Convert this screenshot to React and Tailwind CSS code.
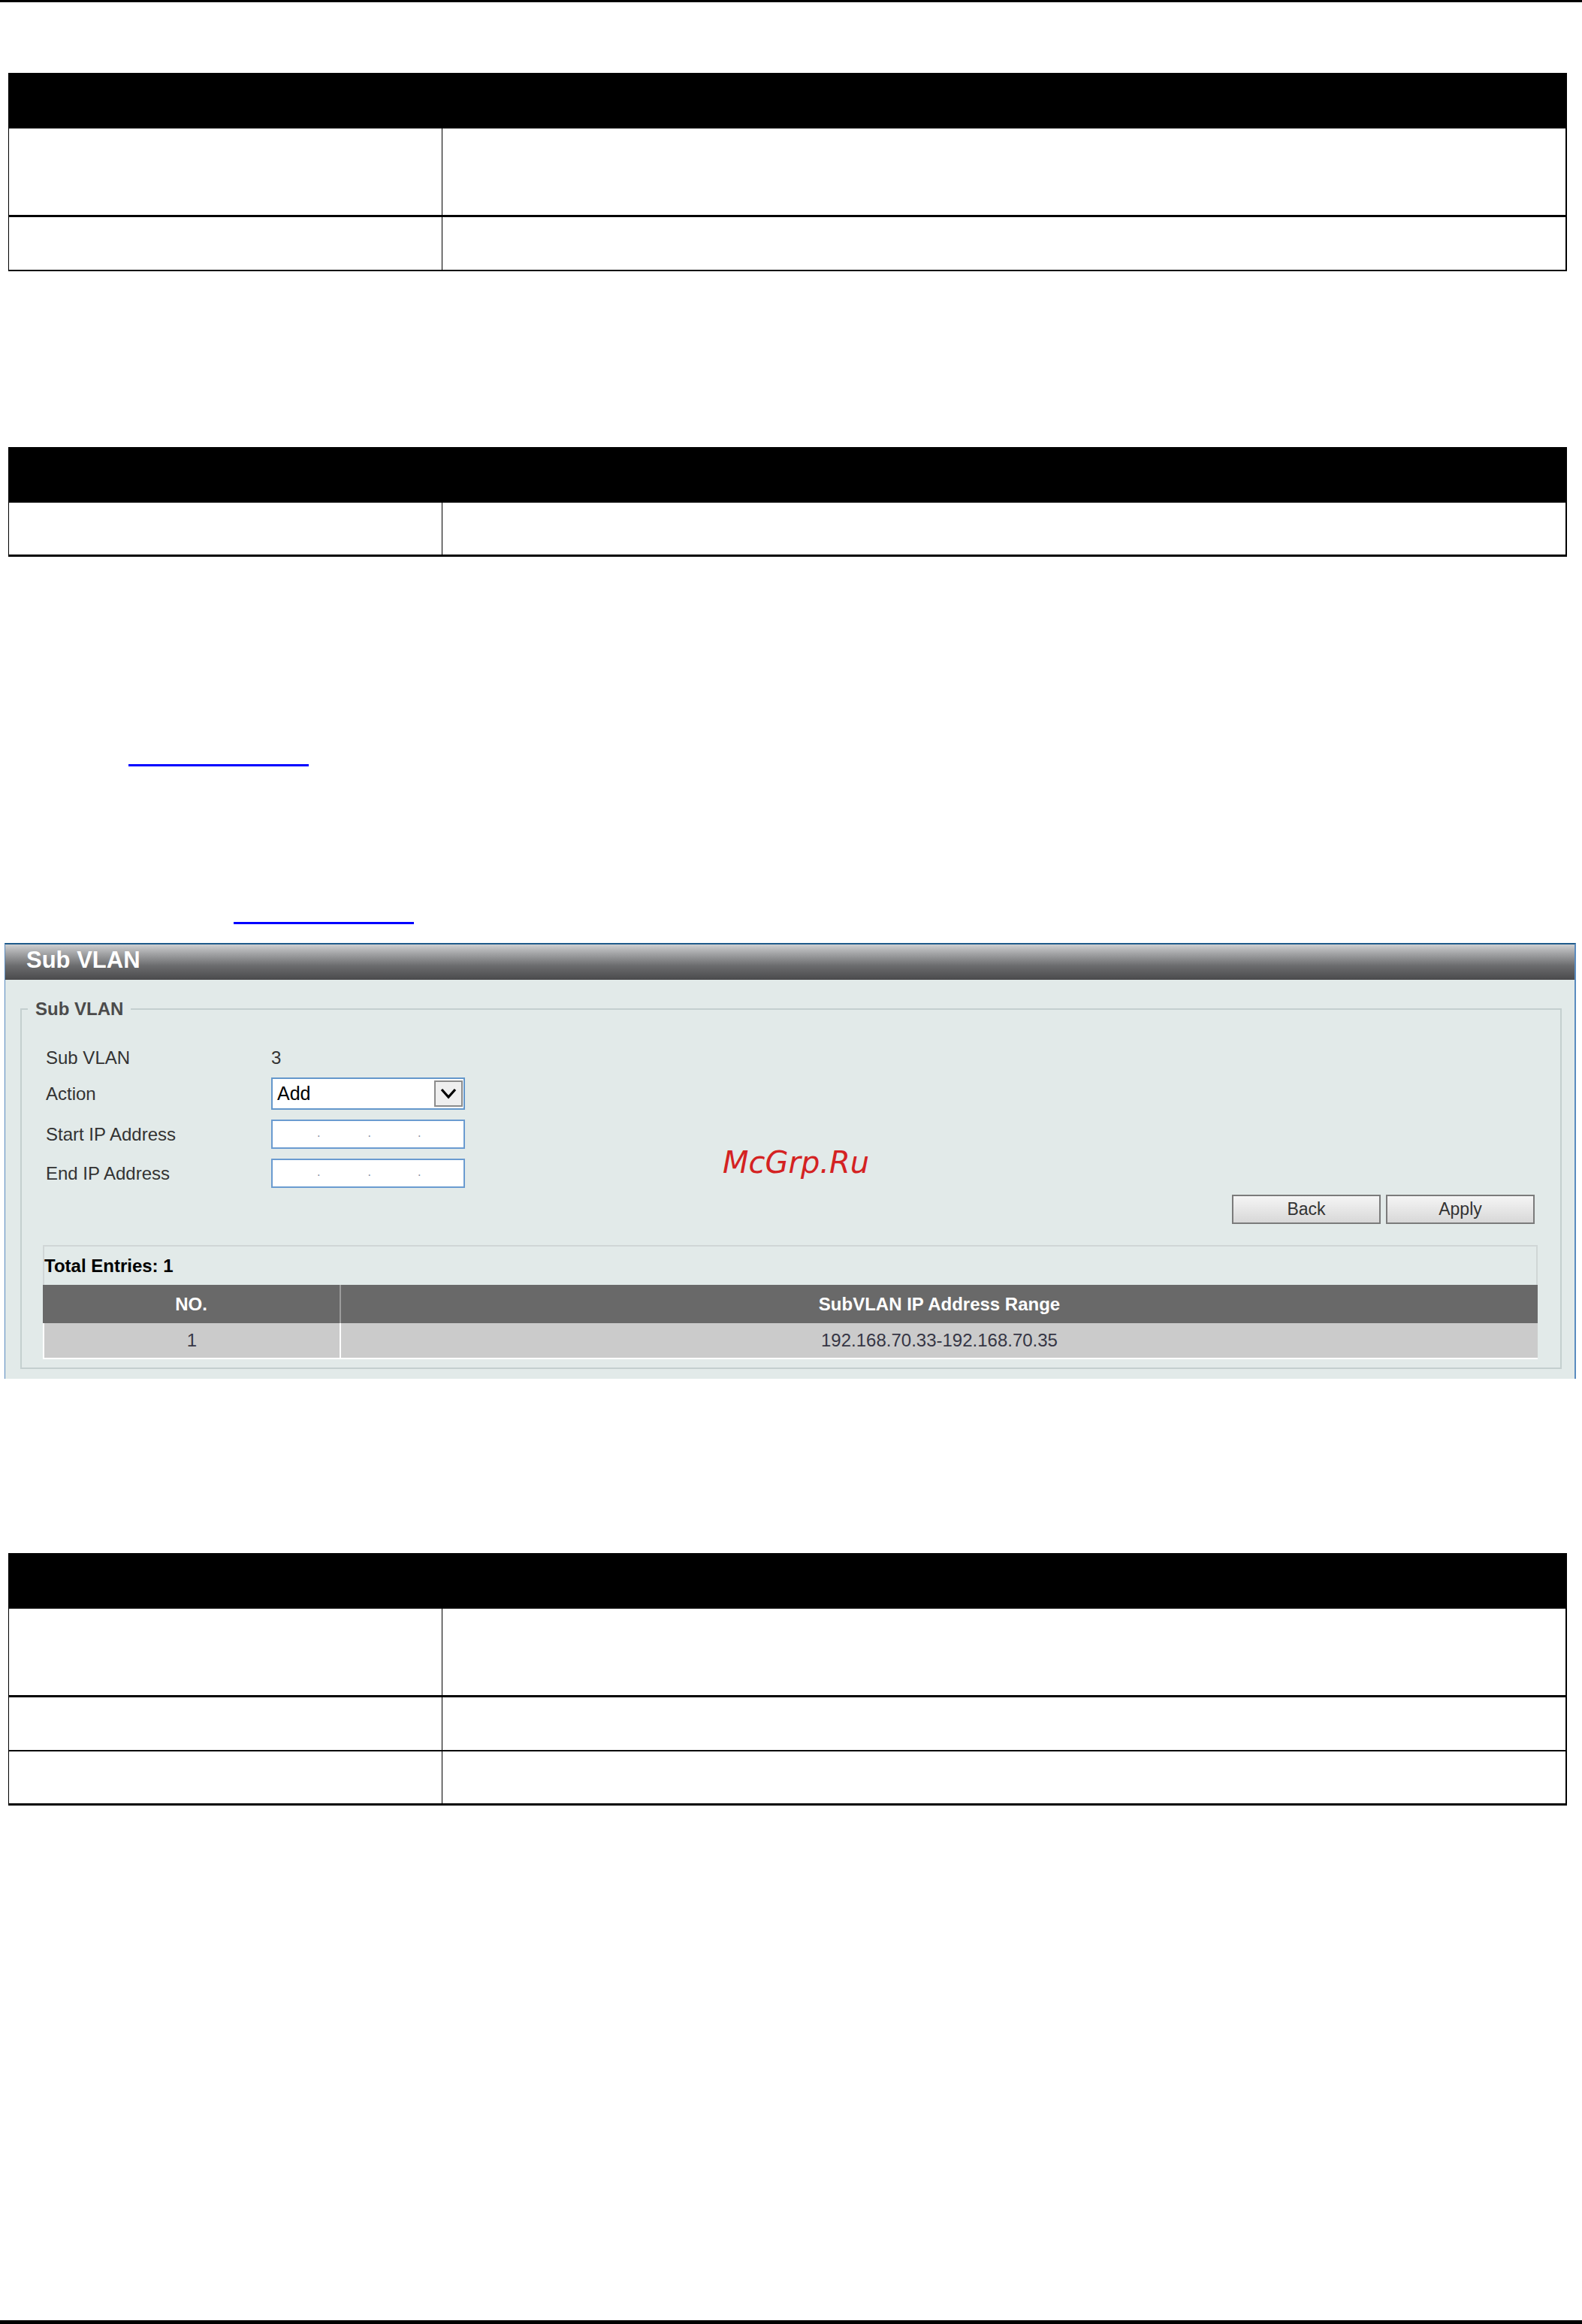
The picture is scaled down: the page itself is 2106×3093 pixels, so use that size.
import React from "react";

function DocTable({ rows }) {
  return (
    <div className="ml-[11px] w-[2075px] border-l border-r-2 border-black">
      <div className="h-[74px] bg-black" />
      {rows.map((cls, i) => (
        <div key={i} className={"flex " + cls}>
          <div className="w-[577px] border-r border-black" />
          <div className="flex-1" />
        </div>
      ))}
    </div>
  );
}

function IpInput() {
  return (
    <div className="w-[258px] h-[39px] border-2 border-[#6a9bd0] bg-white flex items-center text-[16px] leading-none text-[#7f8ca0]">
      <span className="ml-[59px] -mt-[4px]">.</span>
      <span className="ml-[63px] -mt-[4px]">.</span>
      <span className="ml-[62px] -mt-[4px]">.</span>
    </div>
  );
}

export default function App() {
  return (
    <div className="w-[2106px] h-[3093px] bg-white font-['Liberation_Sans',Arial,sans-serif] overflow-hidden">
      <div className="h-[3px] bg-black" />

      <div className="mt-[94px]">
        <DocTable
          rows={[
            "h-[118px] border-b-[3px] border-black",
            "h-[72px] border-b-2 border-black",
          ]}
        />
      </div>

      <div className="mt-[234px]">
        <DocTable rows={["h-[72px] border-b-[3px] border-black"]} />
      </div>

      <div className="mt-[276px] ml-[171px] w-[240px] h-[3px] bg-[#0000ff]" />
      <div className="mt-[207px] ml-[311px] w-[240px] h-[3px] bg-[#0000ff]" />

      {/* Sub VLAN panel */}
      <div className="relative mt-[25px] ml-[6px] w-[2092px] border-t-2 border-t-[#1f5b8b] border-l border-r-2 border-x-[#5a8bbf] bg-[#e2eae9]">
        <div className="h-[47px] bg-[linear-gradient(to_bottom,#cfd0d2_0%,#a4a5a7_25%,#6b6c6e_60%,#4a4a4c_100%)] pl-[28px] pt-[3px]">
          <span className="text-[31px] leading-[35px] font-bold text-white">Sub VLAN</span>
        </div>

        <div className="pt-[25px] pb-[13px] pl-[20px] pr-[17px]">
          <fieldset className="border-2 border-[#c4cfcf] pl-[7px] pb-[11px]">
            <legend className="px-[10px] ml-[1px] text-[24px] leading-[28px] font-bold text-[#4b4b4b]">
              Sub VLAN
            </legend>

            <div className="ml-[25px] text-[24px] text-[#333333]">
              <div className="mt-[37px] h-[28px] flex items-center">
                <div className="w-[300px]">Sub VLAN</div>
                <div>3</div>
              </div>
              <div className="mt-[12px] h-[43px] flex items-center">
                <div className="w-[300px]">Action</div>
                <div className="w-[258px] h-[43px] border-2 border-[#6497cb] bg-white flex items-center justify-between pl-[6px] pr-[1px]">
                  <span className="text-[25px] text-black">Add</span>
                  <div className="w-[38px] h-[35px] border-2 border-[#8c8c8c] bg-[#efefef] flex items-center justify-center">
                    <svg width="22" height="15" viewBox="0 0 22 15">
                      <path d="M2 2 L11 12 L20 2" stroke="#000" strokeWidth="3.2" fill="none" />
                    </svg>
                  </div>
                </div>
              </div>
              <div className="mt-[13px] h-[39px] flex items-center">
                <div className="w-[300px]">Start IP Address</div>
                <IpInput />
              </div>
              <div className="mt-[13px] h-[39px] flex items-center">
                <div className="w-[300px]">End IP Address</div>
                <IpInput />
              </div>
            </div>

            <div className="mt-[9px] flex justify-end gap-[7px] pr-[34px]">
              <button className="w-[198px] h-[39px] border-2 border-[#7b7b7b] bg-[linear-gradient(to_bottom,#f5f5f5,#d8d8d8)] text-[23px] text-[#333333]">
                Back
              </button>
              <button className="w-[198px] h-[39px] border-2 border-[#7b7b7b] bg-[linear-gradient(to_bottom,#f5f5f5,#d8d8d8)] text-[23px] text-[#333333]">
                Apply
              </button>
            </div>

            <div className="mt-[28px] ml-[21px] mr-[30px]">
              <div className="h-[53px] border-t-2 border-x-2 border-[#d0d6d6] flex items-center text-[24px] font-bold text-black">
                Total Entries: 1
              </div>
              <div className="flex h-[51px] bg-[#696969] text-[24px] font-bold text-white">
                <div className="w-[397px] flex items-center justify-center border-r-2 border-[#9c9c9c]">NO.</div>
                <div className="flex-1 flex items-center justify-center">SubVLAN IP Address Range</div>
              </div>
              <div className="flex h-[48px] bg-[#cbcbcb] border-l-2 border-b-2 border-white text-[24px] text-[#363645]">
                <div className="w-[395px] flex items-center justify-center border-r-2 border-white">1</div>
                <div className="flex-1 flex items-center justify-center">192.168.70.33-192.168.70.35</div>
              </div>
            </div>
          </fieldset>
        </div>

        <div className="absolute left-[955px] top-[270px] text-[40px] leading-[40px] italic text-[#d42222] font-['DejaVu_Sans',sans-serif]">
          McGrp.Ru
        </div>
      </div>

      <div className="mt-[232px]">
        <DocTable
          rows={[
            "h-[118px] border-b-[3px] border-black",
            "h-[72px] border-b-2 border-black",
            "h-[72px] border-b-[3px] border-black",
          ]}
        />
      </div>

      <div className="mt-[685px] h-[5px] bg-black" />
    </div>
  );
}
